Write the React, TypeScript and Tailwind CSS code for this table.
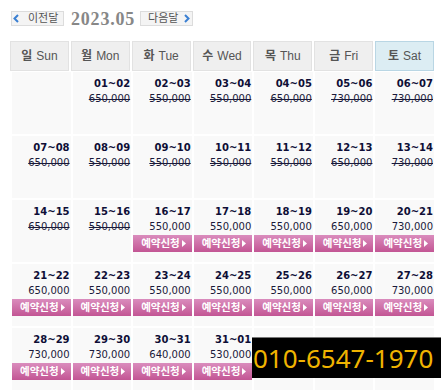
import React from 'react';

type Cell = { d: string; p: string; off?: boolean } | null;

const days = [
  { ko: '일', en: 'Sun' },
  { ko: '월', en: 'Mon' },
  { ko: '화', en: 'Tue' },
  { ko: '수', en: 'Wed' },
  { ko: '목', en: 'Thu' },
  { ko: '금', en: 'Fri' },
  { ko: '토', en: 'Sat' },
];

const rows: Cell[][] = [
  [
    null,
    { d: '01~02', p: '650,000', off: true },
    { d: '02~03', p: '550,000', off: true },
    { d: '03~04', p: '550,000', off: true },
    { d: '04~05', p: '650,000', off: true },
    { d: '05~06', p: '730,000', off: true },
    { d: '06~07', p: '730,000', off: true },
  ],
  [
    { d: '07~08', p: '650,000', off: true },
    { d: '08~09', p: '550,000', off: true },
    { d: '09~10', p: '550,000', off: true },
    { d: '10~11', p: '550,000', off: true },
    { d: '11~12', p: '550,000', off: true },
    { d: '12~13', p: '650,000', off: true },
    { d: '13~14', p: '730,000', off: true },
  ],
  [
    { d: '14~15', p: '650,000', off: true },
    { d: '15~16', p: '550,000', off: true },
    { d: '16~17', p: '550,000' },
    { d: '17~18', p: '550,000' },
    { d: '18~19', p: '550,000' },
    { d: '19~20', p: '650,000' },
    { d: '20~21', p: '730,000' },
  ],
  [
    { d: '21~22', p: '650,000' },
    { d: '22~23', p: '550,000' },
    { d: '23~24', p: '550,000' },
    { d: '24~25', p: '550,000' },
    { d: '25~26', p: '550,000' },
    { d: '26~27', p: '650,000' },
    { d: '27~28', p: '730,000' },
  ],
  [
    { d: '28~29', p: '730,000' },
    { d: '29~30', p: '730,000' },
    { d: '30~31', p: '640,000' },
    { d: '31~01', p: '530,000' },
    null,
    null,
    null,
  ],
];

// 파란 꺾쇠 아이콘
const Chevron = ({ dir }: { dir: 'prev' | 'next' }) => (
  <svg width="6" height="9" viewBox="0 0 6 9" className="shrink-0">
    <polyline
      points={dir === 'prev' ? '5,1 1.5,4.5 5,8' : '1,1 4.5,4.5 1,8'}
      fill="none"
      stroke="#3a7fd2"
      strokeWidth="2"
    />
  </svg>
);

const btnText = "text-[11px] leading-none text-[#555] font-['Liberation_Sans','Noto_Sans_CJK_KR',sans-serif]";

export default function App() {
  return (
    <div className="relative w-[441px] h-[391px] bg-white overflow-hidden">
      {/* 상단: 이전달 / 년월 / 다음달 */}
      <div className="flex items-center h-[15px] mt-[11px] ml-[11px]">
        <button className={`flex items-center w-[53px] h-[15px] pl-[1px] bg-[#f4f4f4] border border-[#dcdcdc] ${btnText}`}>
          <Chevron dir="prev" />
          <span className="ml-[9px]">이전달</span>
        </button>
        <span className="ml-[7px] text-[18px] font-bold tracking-[0.8px] text-[#878787] leading-none font-['Liberation_Serif',serif]">
          2023.05
        </span>
        <button className={`ml-[5px] flex items-center w-[53px] h-[15px] pl-[7px] bg-[#f4f4f4] border border-[#dcdcdc] ${btnText}`}>
          <span>다음달</span>
          <span className="ml-[6px]"><Chevron dir="next" /></span>
        </button>
      </div>

      {/* 요일 헤더 */}
      <div className="grid grid-cols-7 gap-[2px] ml-[10px] w-[424px] mt-[15px]">
        {days.map((d, i) => (
          <div
            key={d.en}
            className={`h-[30px] flex items-center justify-center border text-[12px] text-[#555] font-['Liberation_Sans','Noto_Sans_CJK_KR',sans-serif] ${
              i === 6 ? 'bg-[#dcedf3] border-[#b9d6e4]' : 'bg-[#efefef] border-[#e2e2e2]'
            }`}
          >
            <span className="font-bold mr-[4px]">{d.ko}</span>
            <span>{d.en}</span>
          </div>
        ))}
      </div>

      {/* 날짜 셀 */}
      <div className="grid grid-cols-7 gap-[2px] ml-[12px] w-[422px] mt-[1px]">
        {rows.flat().map((c, i) => (
          <div key={i} className="h-[62px] bg-[#f9f9f9] pt-[4px]">
            {c && (
              <div className="flex flex-col">
                <div className="h-[15px] leading-[15px] text-right pr-[1px] text-[10px] font-bold text-[#0e0e36] font-['DejaVu_Sans',sans-serif]">
                  {c.d}
                </div>
                <div
                  className={`h-[15px] leading-[15px] text-right pr-[1px] text-[10px] text-[#1a1a3a] font-['DejaVu_Sans',sans-serif] ${
                    c.off ? 'line-through' : ''
                  }`}
                >
                  {c.p}
                </div>
                {!c.off && (
                  <div className="mt-[1px] h-[17px] flex items-center pl-[8px] gap-[2px] bg-gradient-to-b from-[#da8cbd] to-[#c25594] text-white text-[10.5px] font-semibold leading-none font-['Noto_Sans_CJK_KR',sans-serif]">
                    <span>예약신청</span>
                    <svg width="4" height="7" viewBox="0 0 4 7">
                      <polygon points="0,0 4,3.5 0,7" fill="#fff" />
                    </svg>
                  </div>
                )}
              </div>
            )}
          </div>
        ))}
      </div>

      {/* 전화번호 */}
      <div className="absolute left-[252px] top-[337px] w-[189px] h-[41px] bg-black border-t border-[#777] flex items-center">
        <span className="text-[26px] leading-none text-[#f0b400] font-['Noto_Sans',sans-serif] ml-[1px]">
          010-6547-1970
        </span>
      </div>
    </div>
  );
}
